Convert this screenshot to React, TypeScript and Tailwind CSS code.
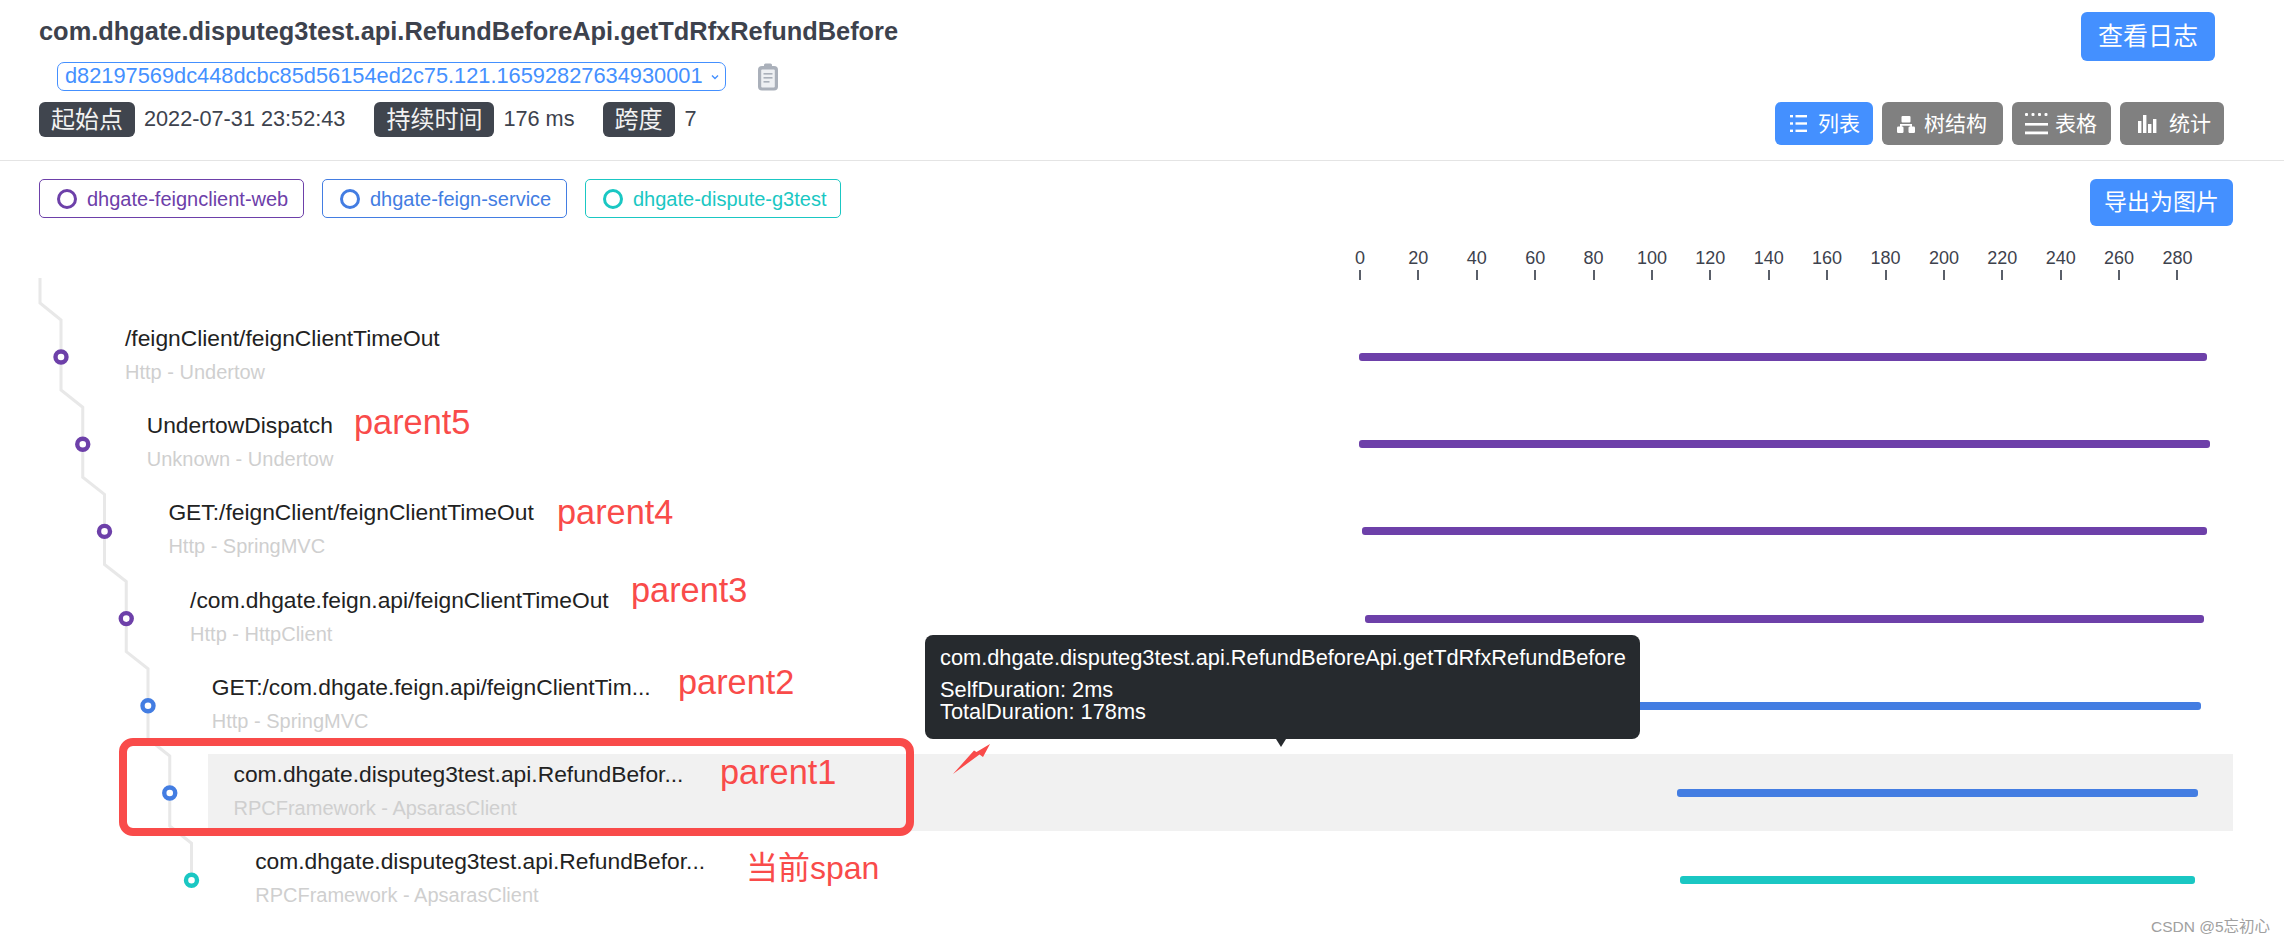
import type { ReactNode } from "react";

// Trace detail view: header, service legend, time axis and the span list.

const PURPLE = "#6d40a9";
const BLUE = "#437de2";
const TEAL = "#1ac7c3";

interface Span {
  name: string;
  sub: string;
  color: string;
  start: number;
  end: number;
}

const SPANS: Span[] = [
  { name: "/feignClient/feignClientTimeOut", sub: "Http - Undertow", color: PURPLE, start: 1359, end: 2207 },
  { name: "UndertowDispatch", sub: "Unknown - Undertow", color: PURPLE, start: 1359, end: 2210 },
  { name: "GET:/feignClient/feignClientTimeOut", sub: "Http - SpringMVC", color: PURPLE, start: 1362, end: 2207 },
  { name: "/com.dhgate.feign.api/feignClientTimeOut", sub: "Http - HttpClient", color: PURPLE, start: 1365, end: 2204 },
  { name: "GET:/com.dhgate.feign.api/feignClientTim...", sub: "Http - SpringMVC", color: BLUE, start: 1368, end: 2201 },
  { name: "com.dhgate.disputeg3test.api.RefundBefor...", sub: "RPCFramework - ApsarasClient", color: BLUE, start: 1677, end: 2198 },
  { name: "com.dhgate.disputeg3test.api.RefundBefor...", sub: "RPCFramework - ApsarasClient", color: TEAL, start: 1680, end: 2195 },
];

const TICKS = [0, 20, 40, 60, 80, 100, 120, 140, 160, 180, 200, 220, 240, 260, 280];

const NOTES = [
  { text: "parent5", cls: "left-[354px] top-[402px] text-[34.3px]" },
  { text: "parent4", cls: "left-[557px] top-[492px] text-[34.3px]" },
  { text: "parent3", cls: "left-[631px] top-[570px] text-[34.3px]" },
  { text: "parent2", cls: "left-[678px] top-[662px] text-[34.3px]" },
  { text: "parent1", cls: "left-[720px] top-[752px] text-[34.3px]" },
  { text: "当前span", cls: "left-[746px] top-[848px] text-[32px]" },
];

function ListIcon() {
  return (
    <svg width="17" height="19" viewBox="0 0 17 19" fill="white">
      <rect x="0" y="1" width="3" height="2.4" />
      <rect x="0" y="8.3" width="3" height="2.4" />
      <rect x="0" y="15.6" width="3" height="2.4" />
      <rect x="5.5" y="1" width="11.5" height="2.4" />
      <rect x="5.5" y="8.3" width="11.5" height="2.4" />
      <rect x="5.5" y="15.6" width="11.5" height="2.4" />
    </svg>
  );
}

function TreeIcon() {
  return (
    <svg width="18" height="18" viewBox="0 0 18 18" fill="white">
      <rect x="4.5" y="1" width="9" height="6.5" rx="1" />
      <path d="M3 12V9h12v3h-1.8v-1.2H4.8V12z" />
      <rect x="0" y="11.5" width="6.5" height="6.5" rx="1.2" />
      <rect x="11.5" y="11.5" width="6.5" height="6.5" rx="1.2" />
    </svg>
  );
}

function TableIcon() {
  return (
    <svg width="23" height="23" viewBox="0 0 23 23" fill="white">
      <rect x="0" y="1" width="3" height="3" rx="1" />
      <rect x="6.5" y="1" width="3" height="3" rx="1" />
      <rect x="13" y="1" width="3" height="3" rx="1" />
      <rect x="19.5" y="1" width="3" height="3" rx="1" />
      <rect x="0" y="11" width="23" height="2.6" />
      <rect x="0" y="19.5" width="23" height="2.8" />
    </svg>
  );
}

function StatIcon() {
  return (
    <svg width="19" height="18" viewBox="0 0 19 18" fill="white">
      <rect x="0" y="6" width="3.4" height="12" />
      <rect x="5" y="0" width="3.4" height="18" />
      <rect x="10" y="9" width="3.4" height="9" />
      <rect x="15" y="4" width="3.4" height="14" />
    </svg>
  );
}

function ClipboardIcon() {
  return (
    <svg width="22" height="28" viewBox="0 0 22 28" fill="none">
      <rect x="1" y="3" width="20" height="24.5" rx="4" fill="#aab0ba" />
      <rect x="7" y="0.5" width="8" height="5" rx="1.5" fill="#aab0ba" />
      <rect x="4.2" y="6.5" width="13.6" height="18" rx="1" fill="#eef0f3" />
      <rect x="6.5" y="10" width="9" height="1.6" fill="#aab0ba" />
      <rect x="6.5" y="14" width="9" height="1.6" fill="#aab0ba" />
      <rect x="6.5" y="18" width="6" height="1.6" fill="#aab0ba" />
    </svg>
  );
}

function Badge({ children }: { children: ReactNode }) {
  return (
    <span className="flex h-[35px] items-center rounded-[6px] bg-[#40454e] px-[12px] text-[24px] text-[#f2f2f2]">
      {children}
    </span>
  );
}

function ViewButton({
  icon,
  label,
  cls,
}: {
  icon: ReactNode;
  label: string;
  cls: string;
}) {
  return (
    <button className={`flex h-[43px] items-center rounded-[6px] text-[21px] text-white ${cls}`}>
      {icon}
      <span>{label}</span>
    </button>
  );
}

function ServiceTag({
  label,
  cls,
  color,
}: {
  label: string;
  cls: string;
  color: string;
}) {
  return (
    <div
      className={`flex h-[39px] items-center rounded-[5px] border pl-[17px] text-[20px] ${cls}`}
    >
      <span
        className="mr-[10px] h-[20px] w-[20px] rounded-full border-[3px]"
        style={{ borderColor: color }}
      />
      {label}
    </div>
  );
}

function TreeLines() {
  const xs = SPANS.map((_, i) => 61 + 21.75 * i);
  const ys = SPANS.map((_, i) => 357 + 87.2 * i);
  let d = "M40 278V303";
  xs.forEach((x, i) => {
    d += `L${x} ${ys[i] - 37}`;
    if (i < xs.length - 1) d += `V${ys[i] + 33}`;
    else d += `V${ys[i]}`;
  });
  return (
    <svg className="absolute left-0 top-0" width="220" height="942">
      <path d={d} fill="none" stroke="#e8e8e8" strokeWidth="3" />
      {SPANS.map((s, i) => (
        <circle
          key={i}
          cx={xs[i]}
          cy={ys[i]}
          r="5.5"
          fill="white"
          stroke={s.color}
          strokeWidth="4.4"
        />
      ))}
    </svg>
  );
}

function SpanRow({ span, index }: { span: Span; index: number }) {
  const left = 99 + 21.7 * index;
  const active = index === 5;
  return (
    <div className="h-[87.2px]" style={{ marginLeft: left }}>
      <div className={`flex h-[77px] w-full ${active ? "bg-[#f1f1f1]" : ""}`}>
        <div
          className="shrink-0 pl-[26px] pt-[6px]"
          style={{ width: 1359 - left }}
        >
          <div className="h-[28px] text-[22.8px] leading-[28px] text-[#222222]">
            {span.name}
          </div>
          <div className="mt-[8px] h-[24px] text-[20px] leading-[24px] text-[#cfcfcf]">
            {span.sub}
          </div>
        </div>
        <div className="flex-1">
          <div
            className="mt-[35px] h-[8px] rounded-[3px]"
            style={{
              marginLeft: span.start - 1359,
              width: span.end - span.start,
              background: span.color,
            }}
          />
        </div>
      </div>
    </div>
  );
}

export default function App() {
  return (
    <div className="relative h-[942px] w-[2284px] overflow-hidden bg-white font-['Liberation_Sans','Noto_Sans_CJK_SC',sans-serif]">
      {/* Header */}
      <header className="flex h-[161px] justify-between border-b border-[#e4e4e4]">
        <div className="pl-[39px]">
          <div className="flex h-[62px] items-center text-[25.4px] font-bold text-[#3d424d]">
            com.dhgate.disputeg3test.api.RefundBeforeApi.getTdRfxRefundBefore
          </div>
          <div className="flex items-center">
            <div className="ml-[18px] flex h-[29px] w-[669px] items-center justify-between rounded-[7px] border border-[#4490ff] pl-[7px] pr-[5px] text-[21.8px] text-[#4490ff]">
              <span>d82197569dc448dcbc85d56154ed2c75.121.16592827634930001</span>
              <svg width="10" height="8" viewBox="0 0 10 8" fill="none">
                <path d="M2 2.5l3 3 3-3" stroke="#4490ff" strokeWidth="1.4" />
              </svg>
            </div>
            <span className="ml-[31px]">
              <ClipboardIcon />
            </span>
          </div>
          <div className="mt-[11px] flex items-center text-[21.7px] text-[#3d424d]">
            <Badge>起始点</Badge>
            <span className="ml-[9px]">2022-07-31 23:52:43</span>
            <span className="ml-[29px]">
              <Badge>持续时间</Badge>
            </span>
            <span className="ml-[9px]">176 ms</span>
            <span className="ml-[28px]">
              <Badge>跨度</Badge>
            </span>
            <span className="ml-[10px]">7</span>
          </div>
        </div>
        <div className="flex flex-col items-end pr-[60px]">
          <button className="mr-[9px] mt-[12px] h-[49px] w-[134px] rounded-[6px] bg-[#4490ff] text-[25px] text-white">
            查看日志
          </button>
          <div className="mt-[41px] flex gap-[9px]">
            <ViewButton
              icon={<span className="mr-[11px]"><ListIcon /></span>}
              label="列表"
              cls="w-[98px] bg-[#4490ff] pl-[15px]"
            />
            <ViewButton
              icon={<span className="mr-[9px]"><TreeIcon /></span>}
              label="树结构"
              cls="w-[121px] bg-[#808080] pl-[15px]"
            />
            <ViewButton
              icon={<span className="mr-[7px]"><TableIcon /></span>}
              label="表格"
              cls="w-[99px] bg-[#808080] pl-[13px]"
            />
            <ViewButton
              icon={<span className="mr-[12px]"><StatIcon /></span>}
              label="统计"
              cls="w-[104px] bg-[#808080] pl-[18px]"
            />
          </div>
        </div>
      </header>

      {/* Service legend */}
      <div className="flex items-start justify-between pl-[39px] pr-[51px] pt-[18px]">
        <div className="flex gap-[18px]">
          <ServiceTag label="dhgate-feignclient-web" cls="w-[265px] border-[#6d40a9] text-[#6d40a9]" color={PURPLE} />
          <ServiceTag label="dhgate-feign-service" cls="w-[245px] border-[#437de2] text-[#437de2]" color={BLUE} />
          <ServiceTag label="dhgate-dispute-g3test" cls="w-[256px] border-[#1ac7c3] text-[#1ac7c3]" color={TEAL} />
        </div>
        <button className="h-[47px] w-[143px] rounded-[6px] bg-[#4490ff] text-[23px] text-white">
          导出为图片
        </button>
      </div>

      {/* Time axis */}
      <div className="ml-[1330.8px] mt-[20px] flex text-[18px] text-[#3d424d]">
        {TICKS.map((t) => (
          <div key={t} className="flex w-[58.4px] flex-col items-center">
            <span className="h-[24px] leading-[24px]">{t}</span>
            <span className="h-[10px] w-[2px] bg-[#5a5f69]" />
          </div>
        ))}
      </div>

      {/* Span rows */}
      <div className="mt-[38px] w-[2233px]">
        {SPANS.map((s, i) => (
          <SpanRow key={i} span={s} index={i} />
        ))}
      </div>

      <TreeLines />

      {/* Screenshot annotations */}
      <div className="absolute left-[119px] top-[738px] h-[98px] w-[795px] rounded-[14px] border-[8px] border-[#f94b4a]" />
      {NOTES.map((n) => (
        <span
          key={n.text}
          className={`absolute leading-[40px] text-[#f94b4a] ${n.cls}`}
        >
          {n.text}
        </span>
      ))}
      <svg className="absolute left-[950px] top-[740px]" width="44" height="38">
        <path d="M3 34L24 10.5 26.5 12 40 4 33 17 29.5 14.5z" fill="#f94b4a" />
      </svg>

      {/* Tooltip */}
      <div className="absolute left-[925px] top-[635px] h-[104px] w-[715px] rounded-[8px] bg-[#262a2e] pl-[15px] pt-[12px] text-[21.8px] leading-[22px] text-white">
        <div>com.dhgate.disputeg3test.api.RefundBeforeApi.getTdRfxRefundBefore</div>
        <div className="mt-[10px]">SelfDuration: 2ms</div>
        <div>TotalDuration: 178ms</div>
        <div className="absolute left-[351px] top-[104px] h-0 w-0 border-l-[5px] border-r-[5px] border-t-[8px] border-l-transparent border-r-transparent border-t-[#262a2e]" />
      </div>

      <span className="absolute left-[2151px] top-[915px] text-[15.5px] text-[#a0a0a0]">
        CSDN @5忘初心
      </span>
    </div>
  );
}
